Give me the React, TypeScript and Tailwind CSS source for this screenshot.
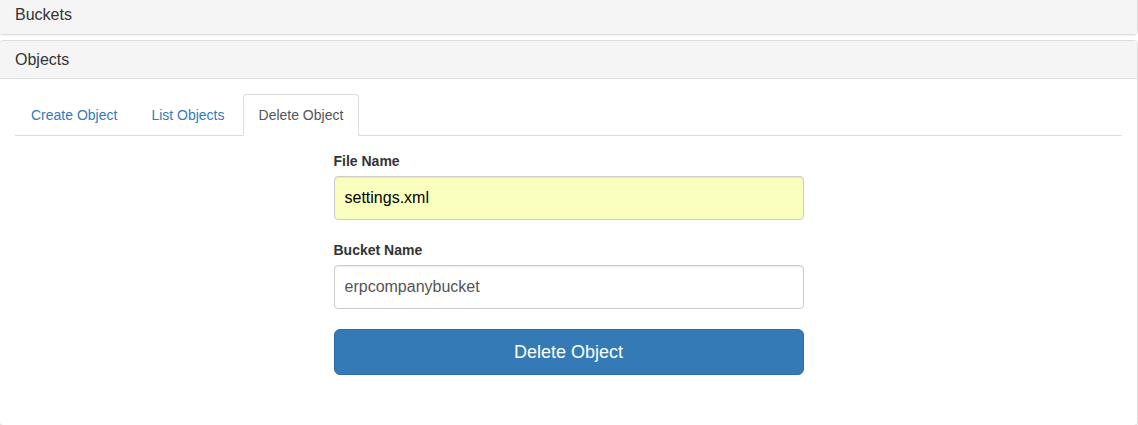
export default function App() {
  const tabs = ["Create Object", "List Objects", "Delete Object"];
  const active = "Delete Object";

  return (
    <div className="min-h-screen bg-white text-[14px] leading-[20px] text-[#333] font-['Liberation_Sans',Arial,sans-serif] overflow-hidden">
      <div className="-ml-px w-[calc(100%+1px)]">
        {/* Buckets panel (collapsed) */}
        <div className="-mt-[5px] border border-[#ddd] rounded-[4px] bg-white shadow-[0_1px_1px_rgba(0,0,0,0.05)]">
          <div className="h-[38px] px-[15px] flex items-center bg-[#f5f5f5] rounded-t-[3px]">
            <h4 className="text-[16px] leading-[18px]">Buckets</h4>
          </div>
        </div>

        {/* Objects panel */}
        <div className="mt-[5px] border border-[#ddd] rounded-[4px] bg-white shadow-[0_1px_1px_rgba(0,0,0,0.05)]">
          <div className="h-[38px] px-[15px] flex items-center bg-[#f5f5f5] border-b border-[#ddd] rounded-t-[3px]">
            <h4 className="text-[16px] leading-[18px]">Objects</h4>
          </div>
          <div className="p-[15px] pb-[50px]">
            <ul className="flex border-b border-[#ddd]">
              {tabs.map((t) => (
                <li key={t} className="mr-[2px] -mb-px">
                  <a
                    className={
                      t === active
                        ? "block px-[15px] py-[10px] border border-[#ddd] border-b-transparent rounded-t-[4px] bg-white text-[#555]"
                        : "block px-[15px] py-[10px] border border-transparent rounded-t-[4px] text-[#337ab7]"
                    }
                  >
                    {t}
                  </a>
                </li>
              ))}
            </ul>

            <form className="w-[470px] mx-auto pt-[15px]">
              <label className="block font-bold mb-[5px]">File Name</label>
              <input
                className="block w-full h-[44px] px-[10px] text-[16px] text-black bg-[#faffbd] border border-[#ccc] rounded-[4px] shadow-[inset_0_1px_1px_rgba(0,0,0,0.075)] outline-none"
                defaultValue="settings.xml"
              />
              <label className="block font-bold mt-[20px] mb-[5px]">Bucket Name</label>
              <input
                className="block w-full h-[44px] px-[10px] text-[16px] text-[#555] bg-white border border-[#ccc] rounded-[4px] shadow-[inset_0_1px_1px_rgba(0,0,0,0.075)] outline-none"
                defaultValue="erpcompanybucket"
              />
              <button
                type="button"
                className="mt-[20px] w-full h-[46px] text-[18px] text-white bg-[#337ab7] border border-[#2e6da4] rounded-[6px]"
              >
                Delete Object
              </button>
            </form>
          </div>
        </div>
      </div>
    </div>
  );
}
